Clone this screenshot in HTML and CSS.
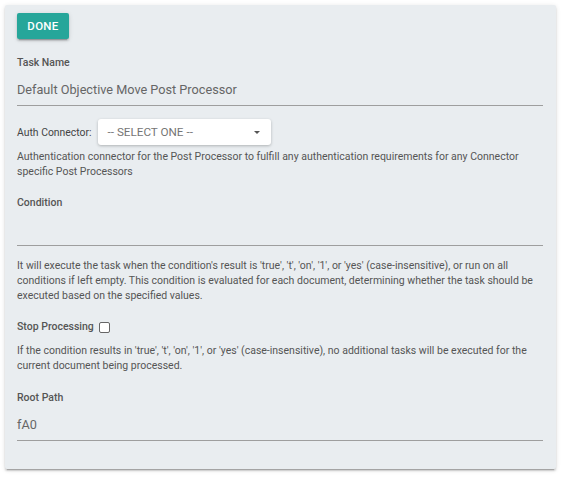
FILE: index.html
```html
<!DOCTYPE html>
<html>
<head>
<meta charset="utf-8">
<link rel="stylesheet" href="styles.css">
</head>
<body>
<div class="card">
  <button class="btn">DONE</button>

  <div class="field field-first">
    <div class="label">Task Name</div>
    <div class="input">Default Objective Move Post Processor</div>
  </div>

  <div class="auth-row">
    <span class="auth-label">Auth Connector:</span>
    <div class="select">
      <span class="select-text">-- SELECT ONE --</span>
      <svg class="caret" width="6" height="3" viewBox="0 0 6 3"><path d="M0 0 L6 0 L3 3 Z" fill="#555"/></svg>
    </div>
  </div>
  <p class="help help-auth">Authentication connector for the Post Processor to fulfill any authentication requirements for any Connector specific Post Processors</p>

  <div class="field field-cond">
    <div class="label">Condition</div>
    <div class="input"></div>
  </div>
  <p class="help help-cond">It will execute the task when the condition's result is 'true', 't', 'on', '1', or 'yes' (case-insensitive), or run on all conditions if left empty. This condition is evaluated for each document, determining whether the task should be executed based on the specified values.</p>

  <div class="stop-row">
    <span class="label">Stop Processing</span>
    <span class="checkbox"></span>
  </div>
  <p class="help help-stop">If the condition results in 'true', 't', 'on', '1', or 'yes' (case-insensitive), no additional tasks will be executed for the current document being processed.</p>

  <div class="field field-root">
    <div class="label">Root Path</div>
    <div class="input">fA0</div>
  </div>
</div>
</body>
</html>
```

FILE: styles.css
```css
* { box-sizing: border-box; }
html, body { margin: 0; padding: 0; background: #ffffff; }
body {
  font-family: Roboto, "Noto Sans", sans-serif;
  padding: 5px 9px 9px 5px;
}
.card {
  background: #e9edf0;
  border-radius: 2px;
  box-shadow: 0 2px 2px 0 rgba(0,0,0,0.14), 0 1px 5px 0 rgba(0,0,0,0.12), 0 3px 1px -2px rgba(0,0,0,0.2);
  padding: 8px 13px 29px 12px;
  height: 464px;
}
.btn {
  display: block;
  width: 52px;
  height: 26px;
  border: none;
  border-radius: 2px;
  background: #26a69a;
  color: #fff;
  font-family: Roboto, sans-serif;
  font-size: 11.5px;
  font-weight: 500;
  letter-spacing: 0.3px;
  padding: 0;
  box-shadow: 0 2px 2px 0 rgba(0,0,0,0.14), 0 1px 5px 0 rgba(0,0,0,0.12), 0 3px 1px -2px rgba(0,0,0,0.2);
}
.label {
  font-size: 10.5px;
  font-weight: 500;
  color: #555;
  line-height: 16px;
}
.input {
  margin-top: 4px;
  height: 31px;
  border-bottom: 1px solid #9e9e9e;
  font-size: 12.7px;
  line-height: 30px;
  color: #666;
}
.field-first { margin-top: 16px; }
.auth-row {
  margin-top: 13px;
  display: flex;
  align-items: center;
  gap: 6px;
}
.auth-label {
  font-size: 10.4px;
  color: #444;
}
.select {
  width: 173px;
  height: 26px;
  background: #fff;
  border-radius: 3px;
  box-shadow: 0 1px 3px rgba(0,0,0,0.25);
  display: flex;
  align-items: center;
  justify-content: space-between;
  padding: 0 11px 0 10px;
}
.select-text {
  font-size: 11.7px;
  color: #757575;
}
.help {
  margin: 0;
  font-size: 10.5px;
  line-height: 15px;
  color: #555;
}
.help-auth { margin-top: 4px; }
.field-cond { margin-top: 16px; }
.help-cond { margin-top: 12px; }
.stop-row {
  margin-top: 16px;
  display: flex;
  align-items: center;
  gap: 5px;
}
.checkbox {
  width: 11px;
  height: 11px;
  border: 1px solid #666;
  border-radius: 2px;
  background: #fff;
}
.help-stop { margin-top: 8px; }
.field-root { margin-top: 17px; }
```
